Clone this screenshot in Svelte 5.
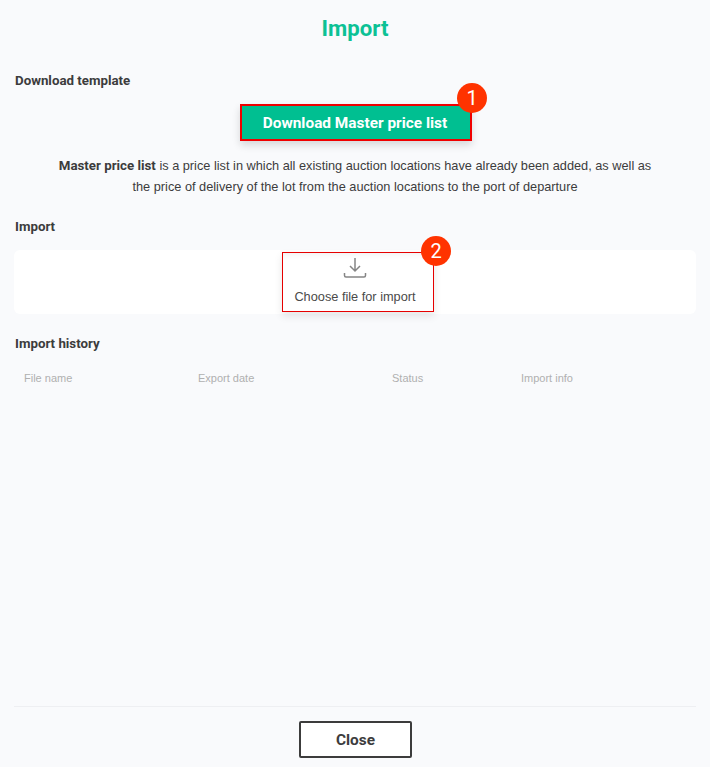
<script lang="ts">
    let columns: string[] = ['File name', 'Export date', 'Status', 'Import info'];
</script>

<div class="modal">
    <h1 class="title">Import</h1>

    <h2 class="section-title first">Download template</h2>
    <div class="center">
        <div class="marked">
            <button type="button" class="download">Download Master price list</button>
            <span class="badge">1</span>
        </div>
    </div>
    <p class="description">
        <b>Master price list</b> is a price list in which all existing auction locations have already been added, as well as
        <br />the price of delivery of the lot from the auction locations to the port of departure
    </p>

    <h2 class="section-title import-title">Import</h2>
    <div class="dropzone">
        <div class="marked">
            <button type="button" class="choose">
                <svg width="24" height="22" viewBox="0 0 24 22" fill="none" stroke="#858585" stroke-width="1.5">
                    <path d="M12 1V14M7 9L12 14L17 9" />
                    <path d="M1.5 16V18.5C1.5 19.5 2 20 3 20H21C22 20 22.5 19.5 22.5 18.5V16" />
                </svg>
                <span>Choose file for import</span>
            </button>
            <span class="badge second">2</span>
        </div>
    </div>

    <h2 class="section-title history-title">Import history</h2>
    <div class="table-head">
        {#each columns as col}
            <div>{col}</div>
        {/each}
    </div>

    <div class="footer">
        <button type="button" class="close">Close</button>
    </div>
</div>

<style>
    :global(body) {
        margin: 0;
        background-color: #f9fafc;
    }

    .modal {
        height: 767px;
        box-sizing: border-box;
        padding: 0 14px;
        display: flex;
        flex-direction: column;
        font-family: Roboto, 'Liberation Sans', sans-serif;
        color: #3c3c3c;
    }

    .title {
        margin: 15px 0 0;
        font-size: 22.2px;
        line-height: 26px;
        font-weight: 700;
        text-align: center;
        color: #0cc195;
    }

    .section-title {
        margin: 0;
        padding-left: 1px;
        font-size: 13.3px;
        line-height: 16px;
        font-weight: 700;
        color: #3c3c3c;
    }

    .first {
        margin-top: 32px;
    }

    .center {
        display: flex;
        justify-content: center;
        margin-top: 15px;
    }

    .marked {
        position: relative;
    }

    .download {
        display: block;
        margin-left: 2px;
        width: 232px;
        height: 37px;
        box-sizing: border-box;
        border: 2px solid #f00000;
        padding: 0 2px 0 0;
        background-color: #00bf91;
        color: #fff;
        font-family: inherit;
        font-size: 15.4px;
        font-weight: 700;
        box-shadow: 0 4px 8px rgba(0, 0, 0, 0.14);
    }

    .badge {
        position: absolute;
        top: -21px;
        right: -15px;
        width: 30px;
        height: 30px;
        border-radius: 50%;
        background-color: #ff3300;
        color: #fff;
        font-size: 20px;
        line-height: 30px;
        text-align: center;
    }

    .badge.second {
        top: -16px;
        right: -17px;
    }

    .description {
        margin: 14px 0 0;
        padding: 0 20px;
        font-family: 'Liberation Sans', Arial, sans-serif;
        font-size: 12.75px;
        line-height: 21px;
        text-align: center;
        color: #3c3c3c;
    }

    .description b {
        font-family: Roboto, sans-serif;
        font-size: 13.3px;
    }

    .import-title {
        margin-top: 22px;
    }

    .dropzone {
        margin-top: 15px;
        height: 64px;
        background-color: #fff;
        border-radius: 6px;
        display: flex;
        justify-content: center;
        align-items: center;
    }

    .dropzone .marked {
        margin-left: 6px;
    }

    .choose {
        width: 152px;
        height: 60px;
        box-sizing: border-box;
        border: 1px solid #e60000;
        background-color: #fff;
        padding: 4px 6px 0 0;
        display: flex;
        flex-direction: column;
        align-items: center;
        gap: 10px;
        font-family: 'Liberation Sans', Arial, sans-serif;
        font-size: 12.75px;
        color: #4a4a4a;
        box-shadow: 0 4px 8px rgba(0, 0, 0, 0.1), inset 0 7px 6px -5px rgba(0, 0, 0, 0.06);
    }

    .history-title {
        margin-top: 22px;
    }

    .table-head {
        display: grid;
        grid-template-columns: 174px 194px 129px 1fr;
        margin-top: 19px;
        padding-left: 10px;
        font-family: 'Liberation Sans', Arial, sans-serif;
        font-size: 11px;
        line-height: 14px;
        color: #b0b0b0;
    }

    .footer {
        margin-top: auto;
        border-top: 1px solid #eeeff2;
        padding: 14px 0 9px;
        display: flex;
        justify-content: center;
    }

    .close {
        margin-left: 1px;
        width: 113px;
        height: 37px;
        box-sizing: border-box;
        border: 2px solid #3c3c3c;
        border-radius: 2px;
        background-color: #fff;
        color: #3c3c3c;
        font-family: inherit;
        font-size: 15.4px;
        font-weight: 700;
    }
</style>
